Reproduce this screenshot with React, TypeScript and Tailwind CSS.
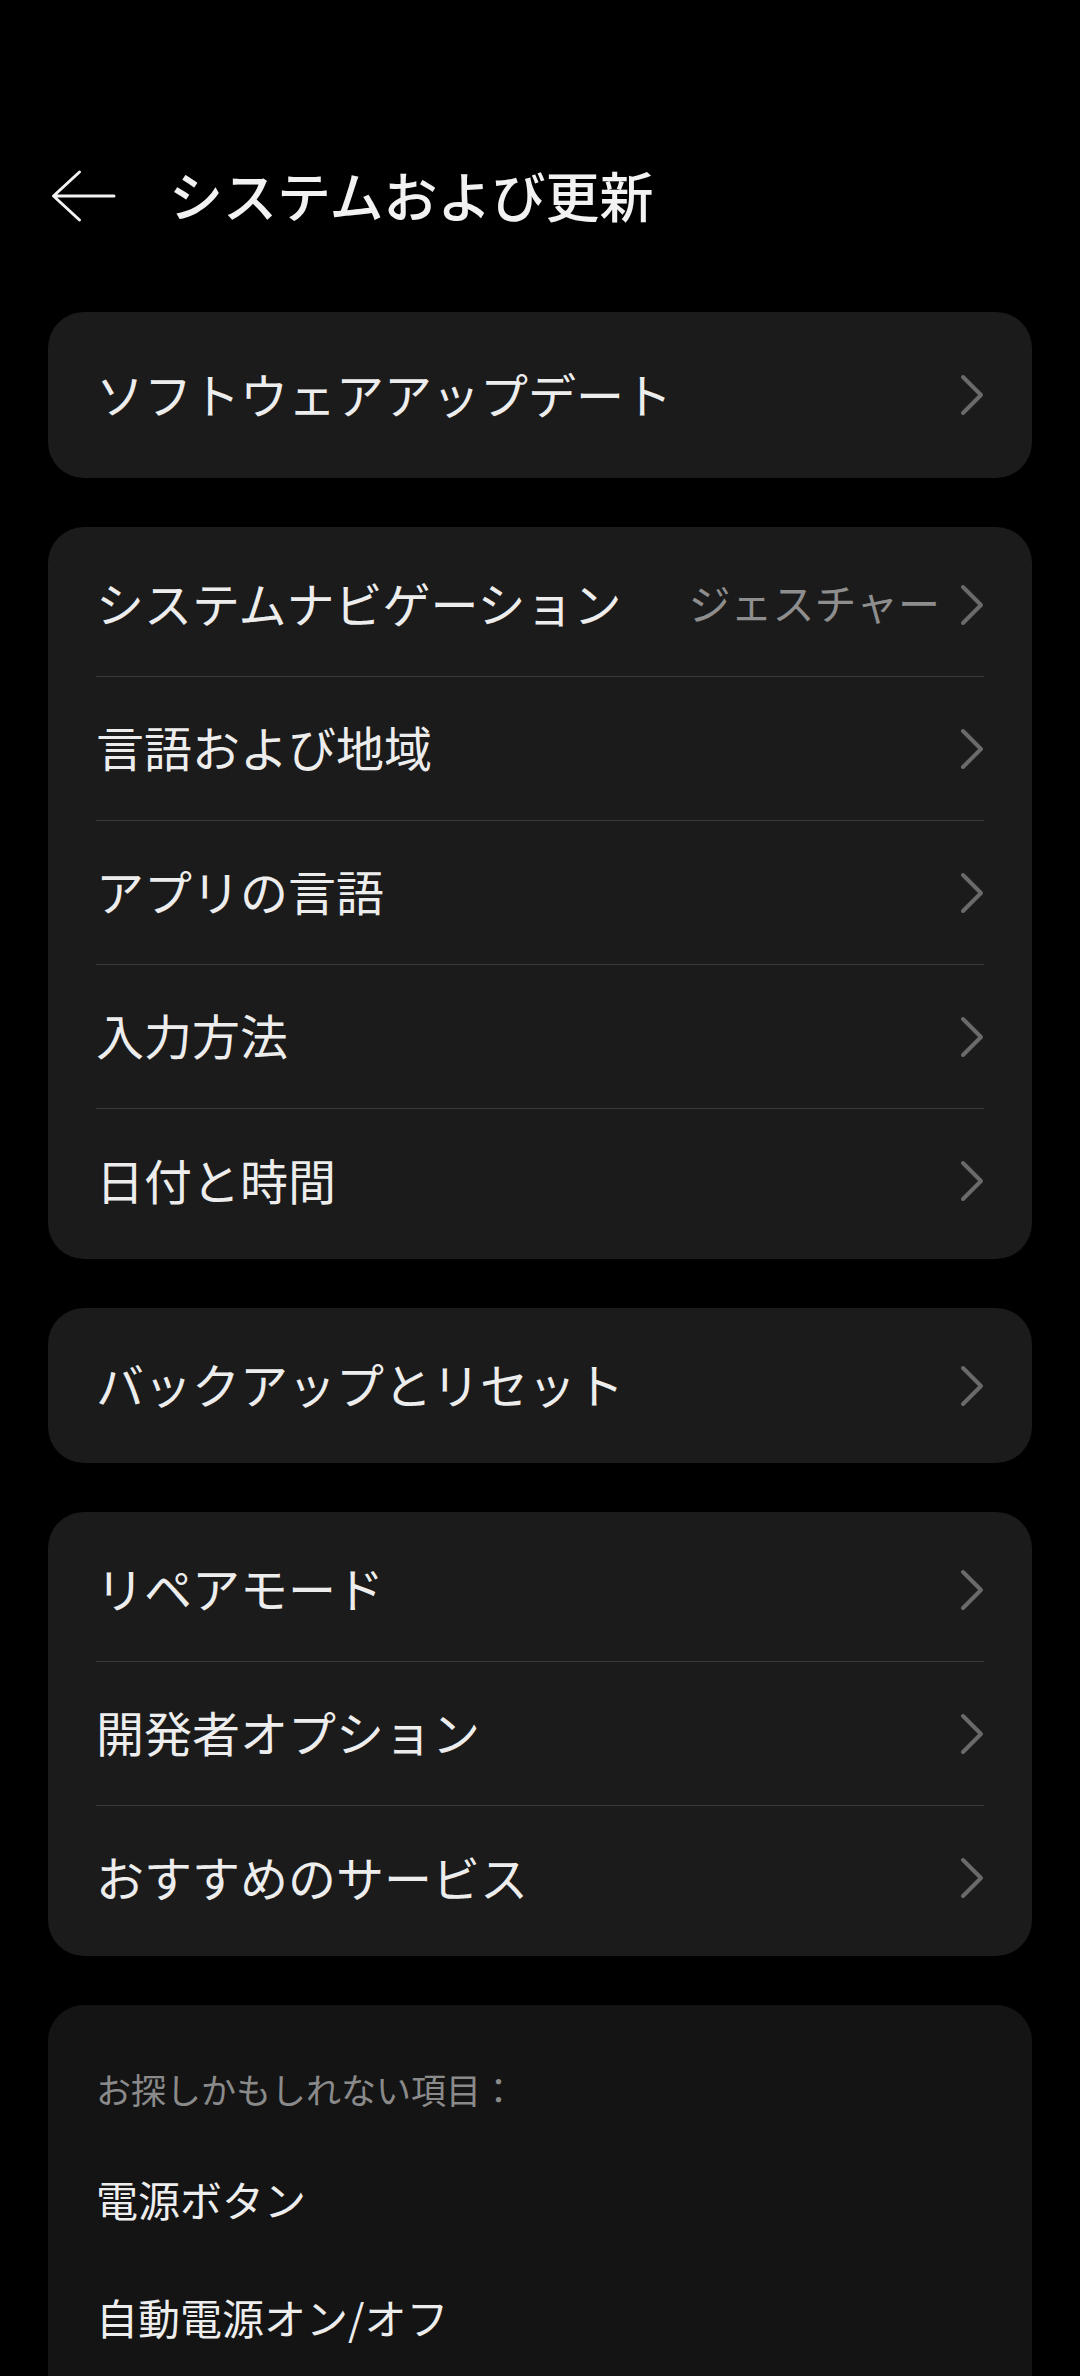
import React from "react";

type Row = { label: string; value?: string };

const groups: { rows: Row[]; height?: string }[] = [
  { rows: [{ label: "ソフトウェアアップデート" }], height: "h-[166px]" },
  {
    rows: [
      { label: "システムナビゲーション", value: "ジェスチャー" },
      { label: "言語および地域" },
      { label: "アプリの言語" },
      { label: "入力方法" },
      { label: "日付と時間" },
    ],
  },
  { rows: [{ label: "バックアップとリセット" }], height: "h-[155px]" },
  {
    rows: [
      { label: "リペアモード" },
      { label: "開発者オプション" },
      { label: "おすすめのサービス" },
    ],
  },
];

function Chevron() {
  return (
    <svg width="24" height="42" viewBox="0 0 24 42" fill="none" className="shrink-0">
      <path
        d="M3 3 L21 21 L3 39"
        stroke="#6a6a6a"
        strokeWidth="4"
        strokeLinecap="round"
        strokeLinejoin="round"
      />
    </svg>
  );
}

function SettingRow({ row, last }: { row: Row; last: boolean }) {
  return (
    <div className="px-[48px]">
      <div
        className={
          "flex h-[144px] items-center " + (last ? "" : "border-b border-[#3a3a3a]")
        }
      >
        <span className="mb-[5px] flex-1 text-[48px] leading-none text-[#ededed]">{row.label}</span>
        {row.value && (
          <span className="mb-[5px] mr-[20px] text-[42px] leading-none text-[#8e8e8e]">{row.value}</span>
        )}
        <Chevron />
      </div>
    </div>
  );
}

export default function App() {
  return (
    <div className="w-[1080px] h-[2376px] overflow-hidden bg-black font-['Noto_Sans_CJK_JP','Noto_Sans',sans-serif]">
      <div className="pt-[140px]">
        <div className="flex h-[114px] items-center pl-[50px]">
          <svg width="68" height="56" viewBox="0 0 68 56" fill="none" className="shrink-0">
            <path
              d="M64 27 H4 M29.5 3 L3.5 27 L29.5 51"
              stroke="#f2f2f2"
              strokeWidth="3"
              strokeLinecap="round"
              strokeLinejoin="round"
            />
          </svg>
          <h1 className="mb-[4px] ml-[51px] text-[54px] font-medium leading-none text-[#f2f2f2]">
            システムおよび更新
          </h1>
        </div>
      </div>

      <div className="mt-[58px] flex flex-col gap-[49px] px-[48px]">
        {groups.map((g, gi) =>
          g.height ? (
            <div key={gi} className={"rounded-[36px] bg-[#1b1b1b] flex items-center px-[48px] " + g.height}>
              <span className="mb-[5px] flex-1 text-[48px] leading-none text-[#ededed]">{g.rows[0].label}</span>
              <Chevron />
            </div>
          ) : (
            <div key={gi} className="rounded-[36px] bg-[#1b1b1b] py-[6px]">
              {g.rows.map((r, ri) => (
                <SettingRow key={ri} row={r} last={ri === g.rows.length - 1} />
              ))}
            </div>
          )
        )}

        <div className="rounded-t-[36px] bg-[#141414] pb-[80px]">
          <div className="flex h-[137px] items-center px-[48px] pt-[30px]">
            <span className="text-[35px] leading-none text-[#8a8a8a]">お探しかもしれない項目：</span>
          </div>
          <div className="flex h-[118px] items-center px-[48px]">
            <span className="mb-[4px] text-[42px] leading-none text-[#ededed]">電源ボタン</span>
          </div>
          <div className="flex h-[118px] items-center px-[48px]">
            <span className="mb-[4px] text-[42px] leading-none text-[#ededed]">自動電源オン/オフ</span>
          </div>
        </div>
      </div>
    </div>
  );
}
